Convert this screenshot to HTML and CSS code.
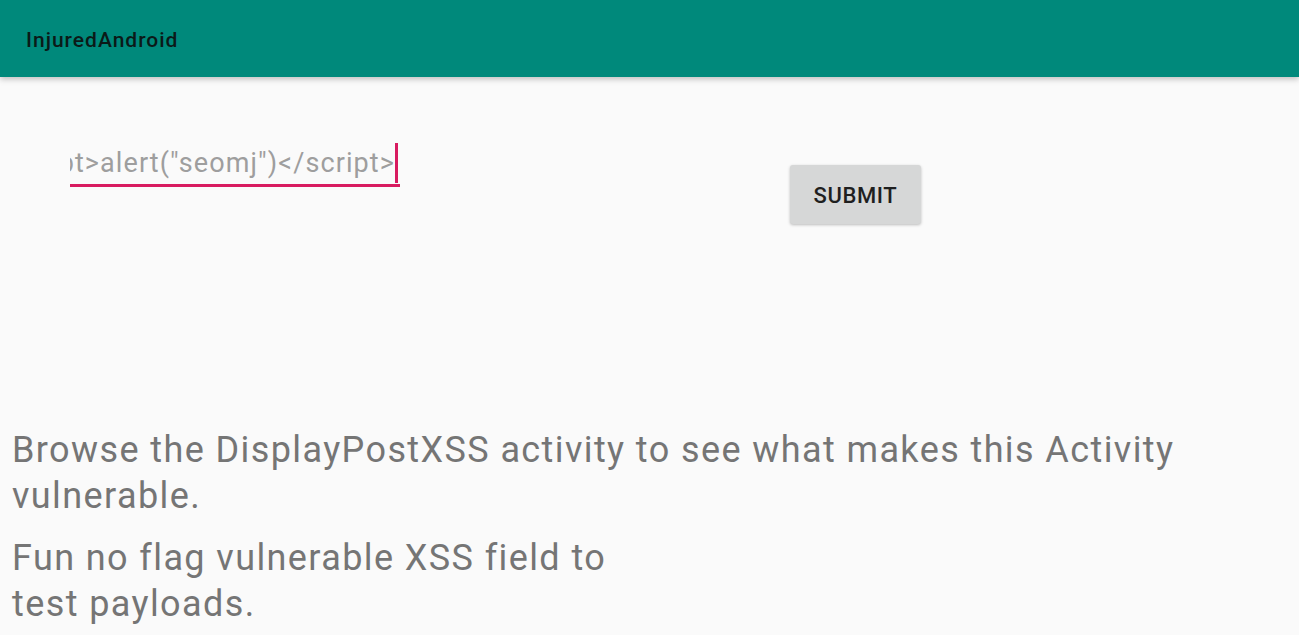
FILE: index.html
```html
<!DOCTYPE html>
<html lang="en">
<head>
    <meta charset="UTF-8">
    <meta name="viewport" content="width=device-width, initial-scale=1.0">
    <title>InjuredAndroid</title>
    <link rel="stylesheet" href="styles.css">
</head>
<body>

    <div class="app-bar">
        <h1>InjuredAndroid</h1>
    </div>

    <div class="content">
        <div class="form-row">
            <div class="edit-text">
                <span class="edit-value">&lt;script&gt;alert("seomj")&lt;/script&gt;</span><span class="cursor"></span>
            </div>
            <button class="submit-btn" type="button">SUBMIT</button>
        </div>

        <p class="info wide">Browse the DisplayPostXSS activity to see what makes this Activity vulnerable.</p>
        <p class="info narrow">Fun no flag vulnerable XSS field to test payloads.</p>
    </div>

</body>
</html>
```

FILE: styles.css
```css
body {
    margin: 0;
    font-family: Roboto, "Noto Sans", sans-serif;
    background-color: #fafafa;
    height: 100vh;
    overflow: hidden;
}
.app-bar {
    height: 77px;
    background-color: #00897b;
    display: flex;
    align-items: center;
    padding-left: 26px;
    box-shadow: 0 2px 6px rgba(0, 0, 0, 0.25);
}
.app-bar h1 {
    margin: 0;
    padding-top: 2px;
    font-size: 21px;
    font-weight: 500;
    letter-spacing: 1px;
    color: #0b1a18;
}
.content {
    padding: 0 12px;
}
.form-row {
    display: flex;
    align-items: flex-start;
    padding-top: 63px;
    padding-left: 58px;
}
.edit-text {
    width: 330px;
    height: 47px;
    display: flex;
    justify-content: flex-end;
    align-items: flex-end;
    overflow: hidden;
    white-space: nowrap;
    border-bottom: 3px solid #d81b60;
    box-sizing: border-box;
    padding-right: 2px;
}
.edit-value {
    font-size: 27px;
    line-height: 32px;
    padding-bottom: 5px;
    letter-spacing: 1.1px;
    color: #9e9e9e;
}
.cursor {
    display: inline-block;
    width: 3px;
    height: 40px;
    margin-bottom: 1px;
    background-color: #d81b60;
    flex-shrink: 0;
}
.submit-btn {
    margin-left: 390px;
    margin-top: 25px;
    width: 131px;
    height: 59px;
    border: none;
    border-radius: 3px;
    background-color: #d6d7d7;
    box-shadow: 0 1px 3px rgba(0, 0, 0, 0.25);
    font-family: Roboto, sans-serif;
    font-size: 22px;
    font-weight: 500;
    color: #1f1f1f;
    letter-spacing: 0.6px;
    padding-top: 2px;
}
.info {
    font-size: 36px;
    line-height: 46px;
    letter-spacing: 1.4px;
    color: #757575;
    margin: 0;
}
.wide {
    margin-top: 203px;
    width: 1220px;
}
.narrow {
    margin-top: 16px;
    width: 630px;
}
```
